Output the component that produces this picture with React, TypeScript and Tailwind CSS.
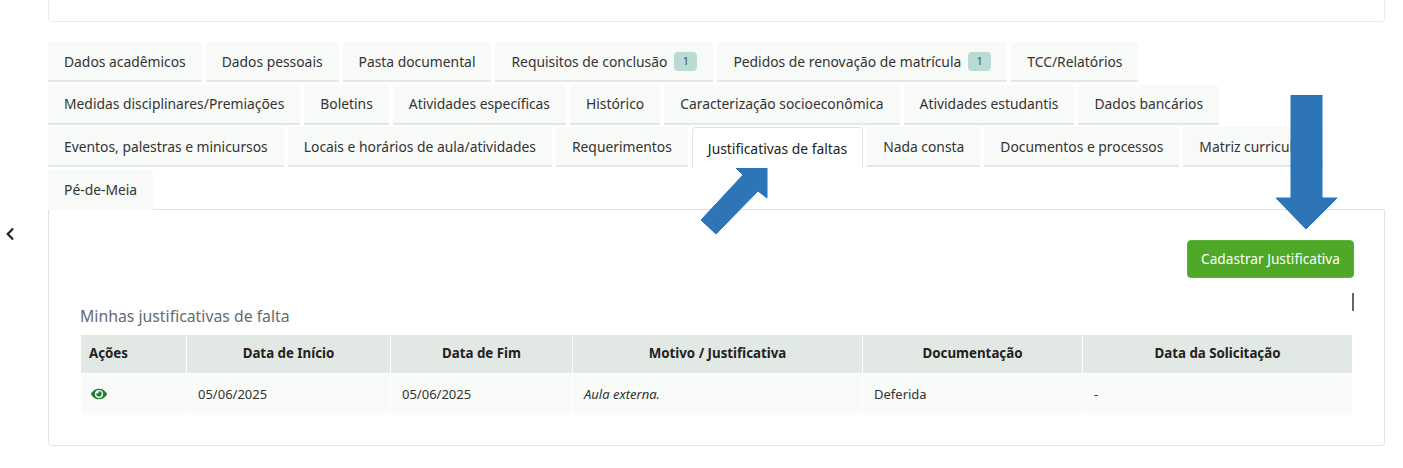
import { FaChevronLeft, FaEye } from 'react-icons/fa';

const tabRows = [
  { label: 'Dados acadêmicos' },
  { label: 'Dados pessoais' },
  { label: 'Pasta documental' },
  { label: 'Requisitos de conclusão', badge: '1' },
  { label: 'Pedidos de renovação de matrícula', badge: '1' },
  { label: 'TCC/Relatórios' },
  { label: 'Medidas disciplinares/Premiações' },
  { label: 'Boletins' },
  { label: 'Atividades específicas' },
  { label: 'Histórico' },
  { label: 'Caracterização socioeconômica' },
  { label: 'Atividades estudantis' },
  { label: 'Dados bancários' },
  { label: 'Eventos, palestras e minicursos' },
  { label: 'Locais e horários de aula/atividades' },
  { label: 'Requerimentos' },
  { label: 'Justificativas de faltas', active: true },
  { label: 'Nada consta' },
  { label: 'Documentos e processos' },
  { label: 'Matriz curricular' },
  { label: 'Pé-de-Meia', last: true },
];

function Tab({ label, badge, active, last }: { label: string; badge?: string; active?: boolean; last?: boolean }) {
  if (active) {
    return (
      <div className="relative z-10 -mb-px flex h-[41px] items-center rounded-t border border-b-0 border-[#dfe6e2] bg-white px-[15px] pt-[2px] text-[13.85px] text-[#222]">
        {label}
      </div>
    );
  }
  return (
    <div
      className={`flex h-[40px] items-center rounded-t bg-[#f8faf8] px-4 text-[13.85px] text-[#333] ${
        last ? 'pt-[1px]' : 'border-b-2 border-[#e2e8e4] pt-[2px]'
      }`}
    >
      {label}
      {badge && (
        <span className="ml-[7px] -mt-[2px] flex h-[19px] w-[23px] items-center justify-center rounded bg-[#b9dbd2] text-[11px] text-[#35594f]">
          {badge}
        </span>
      )}
    </div>
  );
}

const headers = [
  { label: 'Ações', width: 'w-[106px]', align: 'text-left' },
  { label: 'Data de Início', width: 'w-[204px]', align: 'text-center' },
  { label: 'Data de Fim', width: 'w-[182px]', align: 'text-center' },
  { label: 'Motivo / Justificativa', width: 'w-[290px]', align: 'text-center' },
  { label: 'Documentação', width: 'w-[220px]', align: 'text-center' },
  { label: 'Data da Solicitação', width: 'w-[269px]', align: 'text-center' },
];

export default function App() {
  return (
    <div className="relative h-[468px] w-[1403px] overflow-hidden bg-white font-['Noto_Sans','Open_Sans',sans-serif]">
      <FaChevronLeft className="absolute left-[3px] top-[227px] h-[14px] w-[14px] text-[#222]" />

      <div className="ml-[48px] w-[1337px]">
        <div className="h-[22px] rounded-b border border-t-0 border-[#e8ecea]" />

        <div className="mt-[20px] flex flex-wrap gap-x-1 gap-y-[2.67px]">
          {tabRows.map((tab) => (
            <Tab key={tab.label} {...tab} />
          ))}
        </div>

        <div className="-mt-px h-[237px] rounded-b border border-[#dfe6e2] px-[32px] pt-[30px]">
          <div className="flex justify-end">
            <button className="-mr-[2px] h-[38px] w-[167px] rounded border border-[#5cb338] bg-[#4fa827] text-[13.7px] text-white">
              Cadastrar Justificativa
            </button>
          </div>
          <div className="flex justify-end">
            <div className="-mr-[2px] mt-[15px] h-[18px] w-[2px] bg-[#666]" />
          </div>
          <h3 className="-ml-px -mt-[5px] text-[15.8px] leading-[20px] text-[#666b70]">Minhas justificativas de falta</h3>
          <table className="mt-[9px] w-[1271px] table-fixed border-separate border-spacing-0 text-[13px]">
            <thead>
              <tr>
                {headers.map((h) => (
                  <th
                    key={h.label}
                    className={`${h.width} ${h.align} h-[38px] border-r border-white bg-[#e2e9e4] px-2 text-[13.3px] font-bold text-[#222] last:border-r-0`}
                  >
                    {h.label}
                  </th>
                ))}
              </tr>
            </thead>
            <tbody>
              <tr className="text-[#333]">
                <td className="h-[42px] border-r border-t border-white bg-[#f9fbf9] pl-[10px]">
                  <FaEye className="h-4 w-4 text-[#1e7e34]" />
                </td>
                <td className="border-r border-t border-white bg-[#f9fbf9] pl-[11px]">05/06/2025</td>
                <td className="border-r border-t border-white bg-[#f9fbf9] pl-[11px]">05/06/2025</td>
                <td className="border-r border-t border-white bg-[#f9fbf9] pl-[11px] italic">Aula externa.</td>
                <td className="border-r border-t border-white bg-[#f9fbf9] pl-[11px]">Deferida</td>
                <td className="border-t border-white bg-[#f9fbf9] pl-[11px]">-</td>
              </tr>
            </tbody>
          </table>
        </div>
      </div>

      {/* annotation arrows drawn over the screenshot */}
      <svg className="absolute left-[1275px] top-[95px]" width="64" height="135" viewBox="0 0 64 135">
        <path d="M16 0H47V103H62L31 134L1 103H16Z" fill="#2e75b6" stroke="#1f74c4" />
      </svg>
      <svg className="absolute left-[700px] top-[166px]" width="68" height="70" viewBox="0 0 68 70">
        <path d="M1 54L16 68L58 25L67 32L67 1L36 2L43 9Z" fill="#2e75b6" stroke="#1f74c4" />
      </svg>
    </div>
  );
}
